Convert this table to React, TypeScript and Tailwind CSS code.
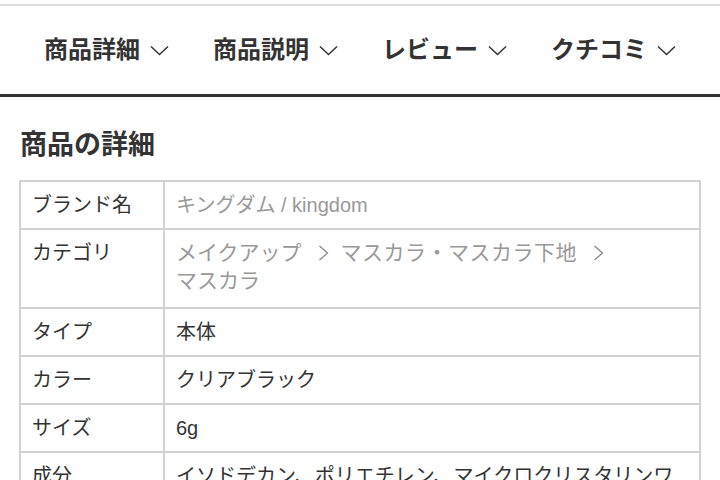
import React from 'react';

const font = { fontFamily: '"Liberation Sans", "Noto Sans CJK JP", sans-serif' };

const Chevron = () => (
    <svg width="19" height="11" viewBox="0 0 19 11" className="shrink-0">
        <path d="M1 1.5 L9.5 9.5 L18 1.5" fill="none" stroke="#333" strokeWidth="1.5" />
    </svg>
);

const Crumb = () => (
    <svg width="11" height="18" viewBox="0 0 11 18" className="ml-[16px] mr-[12px] shrink-0">
        <path d="M1.5 2 L9.5 9 L1.5 16" fill="none" stroke="#888" strokeWidth="1.3" />
    </svg>
);

const tabs = ['商品詳細', '商品説明', 'レビュー', 'クチコミ'];

const rows: { label: string; value: React.ReactNode; muted?: boolean; tall?: boolean }[] = [
    { label: 'ブランド名', value: 'キングダム / kingdom', muted: true },
    {
        label: 'カテゴリ',
        muted: true,
        tall: true,
        value: (
            <span className="flex flex-wrap items-center text-[21px]">
                <span className="flex items-center whitespace-nowrap">メイクアップ<Crumb /></span>
                <span className="flex items-center whitespace-nowrap tracking-[0.5px]">マスカラ・マスカラ下地<Crumb /></span>
                <span className="whitespace-nowrap">マスカラ</span>
            </span>
        ),
    },
    { label: 'タイプ', value: '本体' },
    { label: 'カラー', value: 'クリアブラック' },
    { label: 'サイズ', value: '6g' },
    {
        label: '成分',
        value: 'イソドデカン、ポリエチレン、マイクロクリスタリンワックス、水添ポリイソブテン、トリメチルシロキシケイ酸、ジステアルジモニウムヘクトライト',
    },
];

const App = () => {
    return (
        <div className="w-[720px] h-[480px] overflow-hidden bg-white text-[#333]" style={font}>
            <div className="pt-[4px]">
                <div className="border-t-2 border-[#dcdcdc]" />
                <nav className="flex justify-evenly items-center h-[91px] border-b-[3px] border-[#333]">
                    {tabs.map((t) => (
                        <div key={t} className="flex items-center gap-[10px]">
                            <span className="text-[24px] font-bold leading-none">{t}</span>
                            <Chevron />
                        </div>
                    ))}
                </nav>
            </div>

            <h2 className="pt-[28px] pl-[20px] text-[27px] font-bold leading-[40px]">商品の詳細</h2>

            <div className="mt-[15px] mx-[19px] border-l-2 border-t-2 border-[#d2d2d2]">
                {rows.map((r) => (
                    <div key={r.label} className="grid grid-cols-[144px_1fr] text-[20px] leading-[28px]">
                        <div className={`border-r-2 border-b-2 border-[#d2d2d2] px-[11px] pt-[9px] ${r.tall ? 'pb-[12px]' : 'pb-[9px]'}`}>
                            {r.label}
                        </div>
                        <div
                            className={`border-r-2 border-b-2 border-[#d2d2d2] px-[11px] pt-[9px] ${r.tall ? 'pb-[12px]' : 'pb-[9px]'} ${r.muted ? 'text-[#999]' : 'text-[#333]'}`}
                        >
                            {r.value}
                        </div>
                    </div>
                ))}
            </div>
        </div>
    );
};

export default App;
